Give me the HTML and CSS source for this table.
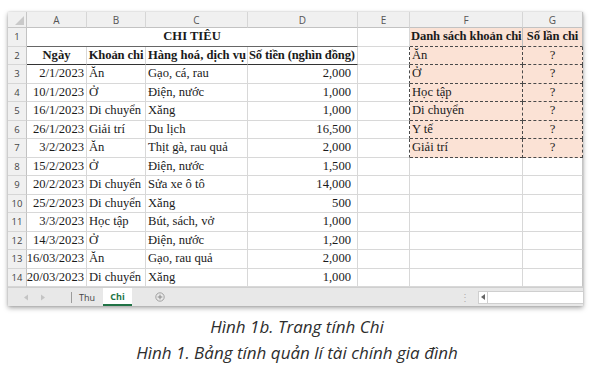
FILE: index.html
```html
<!DOCTYPE html>
<html lang="vi">
<head>
<meta charset="utf-8">
<link rel="stylesheet" href="styles.css">
</head>
<body>
<div class="sheet">
  <div class="grid">
    <div class="corner"><span class="tri"></span></div>
    <div class="ch">A</div><div class="ch">B</div><div class="ch">C</div><div class="ch">D</div><div class="ch">E</div><div class="ch">F</div><div class="ch last">G</div>

    <div class="rh">1</div>
    <div class="c span4 ctr b t1">CHI TIÊU</div>
    <div class="c"></div>
    <div class="c pkh b">Danh sách khoản chi</div>
    <div class="c pkh b ctr last">Số lần chi</div>

    <div class="rh">2</div>
    <div class="c ctr b t2">Ngày</div>
    <div class="c ctr b t2 tight2">Khoản chi</div>
    <div class="c b t2">Hàng hoá, dịch vụ</div>
    <div class="c b t2 tight">Số tiền (nghìn đồng)</div>
    <div class="c el"></div>
    <div class="c pk">Ăn</div>
    <div class="c pk ctr last">?</div>

    <div class="rh">3</div>
    <div class="c r">2/1/2023</div><div class="c">Ăn</div><div class="c">Gạo, cá, rau</div><div class="c num">2,000</div>
    <div class="c el"></div><div class="c pk">Ở</div><div class="c pk ctr last">?</div>

    <div class="rh">4</div>
    <div class="c r">10/1/2023</div><div class="c">Ở</div><div class="c">Điện, nước</div><div class="c num">1,000</div>
    <div class="c el"></div><div class="c pk">Học tập</div><div class="c pk ctr last">?</div>

    <div class="rh">5</div>
    <div class="c r">16/1/2023</div><div class="c">Di chuyển</div><div class="c">Xăng</div><div class="c num">1,000</div>
    <div class="c el"></div><div class="c pk">Di chuyển</div><div class="c pk ctr last">?</div>

    <div class="rh">6</div>
    <div class="c r">26/1/2023</div><div class="c">Giải trí</div><div class="c">Du lịch</div><div class="c num">16,500</div>
    <div class="c el"></div><div class="c pk">Y tế</div><div class="c pk ctr last">?</div>

    <div class="rh">7</div>
    <div class="c r">3/2/2023</div><div class="c">Ăn</div><div class="c">Thịt gà, rau quả</div><div class="c num">2,000</div>
    <div class="c el"></div><div class="c pk">Giải trí</div><div class="c pk ctr last">?</div>

    <div class="rh">8</div>
    <div class="c r">15/2/2023</div><div class="c">Ở</div><div class="c">Điện, nước</div><div class="c num">1,500</div>
    <div class="c"></div><div class="c"></div><div class="c last"></div>

    <div class="rh">9</div>
    <div class="c r">20/2/2023</div><div class="c">Di chuyển</div><div class="c">Sửa xe ô tô</div><div class="c num">14,000</div>
    <div class="c"></div><div class="c"></div><div class="c last"></div>

    <div class="rh">10</div>
    <div class="c r">25/2/2023</div><div class="c">Di chuyển</div><div class="c">Xăng</div><div class="c num">500</div>
    <div class="c"></div><div class="c"></div><div class="c last"></div>

    <div class="rh">11</div>
    <div class="c r">3/3/2023</div><div class="c">Học tập</div><div class="c">Bút, sách, vở</div><div class="c num">1,000</div>
    <div class="c"></div><div class="c"></div><div class="c last"></div>

    <div class="rh">12</div>
    <div class="c r">14/3/2023</div><div class="c">Ở</div><div class="c">Điện, nước</div><div class="c num">1,200</div>
    <div class="c"></div><div class="c"></div><div class="c last"></div>

    <div class="rh">13</div>
    <div class="c r">16/03/2023</div><div class="c">Ăn</div><div class="c">Gạo, rau quả</div><div class="c num">2,000</div>
    <div class="c"></div><div class="c"></div><div class="c last"></div>

    <div class="rh">14</div>
    <div class="c r">20/03/2023</div><div class="c">Di chuyển</div><div class="c">Xăng</div><div class="c num">1,000</div>
    <div class="c"></div><div class="c"></div><div class="c last"></div>
  </div>

  <div class="tabs">
    <div class="nav">
      <svg width="6" height="7" viewBox="0 0 6 7"><path d="M5 0.5 L1 3.5 L5 6.5 Z" fill="#c4c4c4"/></svg>
      <svg width="6" height="7" viewBox="0 0 6 7"><path d="M1 0.5 L5 3.5 L1 6.5 Z" fill="#c4c4c4"/></svg>
    </div>
    <div class="sep"></div>
    <div class="tab">Thu</div>
    <div class="tab active">Chi</div>
    <div class="add">
      <svg width="10" height="10" viewBox="0 0 10 10"><circle cx="5" cy="5" r="4.2" fill="none" stroke="#9a9a9a" stroke-width="0.9"/><path d="M5 2.7 V7.3 M2.7 5 H7.3" stroke="#8a8a8a" stroke-width="1"/></svg>
    </div>
    <div class="spacer"></div>
    <div class="dots">⋮</div>
    <div class="scroll">
      <div class="sbtn"><svg width="4" height="6" viewBox="0 0 4 6"><path d="M4 0 L0 3 L4 6 Z" fill="#666"/></svg></div>
      <div class="track"></div>
    </div>
  </div>
</div>

<div class="captions">
  <p>Hình 1b. Trang tính Chi</p>
  <p>Hình 1. Bảng tính quản lí tài chính gia đình</p>
</div>
</body>
</html>
```

FILE: styles.css
```css
* { box-sizing: border-box; }

body {
  margin: 0;
  background: #ffffff;
  width: 604px;
  height: 372px;
  overflow: hidden;
}

.sheet {
  margin: 12px 0 0 8px;
  width: 575px;
  background: #ffffff;
  box-shadow: 0 2px 5px rgba(0, 0, 0, 0.35), 0 0 2px rgba(0, 0, 0, 0.15);
}

.grid {
  display: grid;
  grid-template-columns: 19px 60px 59px 102px 110px 52px 113px 60px;
  grid-template-rows: 16px;
  grid-auto-rows: 18.5px;
}

.corner {
  background: #f0f0f0;
  border-right: 1px solid #c6c6c6;
  border-bottom: 1px solid #c6c6c6;
  position: relative;
}

.tri {
  position: absolute;
  right: 2px;
  bottom: 2px;
  width: 0;
  height: 0;
  border-left: 9px solid transparent;
  border-bottom: 9px solid #c9c9c9;
}

.ch {
  background: #f0f0f0;
  border-right: 1px solid #d6d6d6;
  border-bottom: 1px solid #c2c2c2;
  font-family: "Open Sans", "Liberation Sans", sans-serif;
  font-size: 10px;
  color: #555555;
  display: flex;
  align-items: center;
  justify-content: center;
}

.rh {
  background: #f0f0f0;
  border-right: 1px solid #c2c2c2;
  border-bottom: 1px solid #d6d6d6;
  font-family: "Open Sans", "Liberation Sans", sans-serif;
  font-size: 9.5px;
  color: #444444;
  display: flex;
  align-items: center;
  justify-content: center;
}

.c {
  border-right: 1px solid #d8d8d8;
  border-bottom: 1px solid #d8d8d8;
  font-family: "Liberation Serif", "Times New Roman", serif;
  font-size: 12.6px;
  color: #1a1a1a;
  padding: 0 2px;
  display: flex;
  align-items: center;
  white-space: nowrap;
  overflow: visible;
}

.last { border-right-color: #c4c4c4; }

.span4 { grid-column: span 4; }
.ctr { justify-content: center; }
.r { justify-content: flex-end; }
.num { justify-content: flex-end; padding-right: 6px; }
.b { font-weight: bold; }
.tight { padding: 0 0 0 1px; letter-spacing: -0.15px; }
.tight2 { padding: 0; letter-spacing: -0.1px; }

.t1 { border-bottom: 1px solid #666666; }
.t2 { border-bottom: 1px solid #333333; }

.pkh {
  background: #fbe2d5;
  border-bottom: 1px dashed #4a4a4a;
  border-right-color: #bdbdbd;
  padding: 0 1px;
  letter-spacing: -0.1px;
}

.pk {
  background: #fbe2d5;
  border-right: 1px dashed #4a4a4a;
  border-bottom: 1px dashed #4a4a4a;
}

.el { border-right: 1px dashed #4a4a4a; }

.tabs {
  height: 19px;
  background: #e8e8e8;
  border-top: 1px solid #cfcfcf;
  display: flex;
  align-items: stretch;
  font-family: "Open Sans", "Liberation Sans", sans-serif;
  font-size: 9px;
}

.nav {
  width: 63px;
  display: flex;
  align-items: center;
  gap: 11px;
  padding-left: 15px;
}

.sep {
  width: 1px;
  height: 11px;
  align-self: center;
  background: #9c9c9c;
}

.tab {
  display: flex;
  align-items: center;
  justify-content: center;
  color: #444444;
  width: 30px;
}

.tab.active {
  background: #ffffff;
  color: #217346;
  font-weight: bold;
  width: 29px;
  margin-left: 1px;
  border-bottom: 2px solid #217346;
}

.add {
  display: flex;
  align-items: center;
  padding-left: 23px;
}

.spacer { flex: 1; }

.dots {
  display: flex;
  align-items: center;
  color: #b0b0b0;
  font-size: 10px;
  padding-right: 8px;
}

.scroll {
  width: 105px;
  display: flex;
  align-items: center;
}

.sbtn {
  width: 10px;
  height: 13px;
  background: #ffffff;
  border: 1px solid #cfcfcf;
  display: flex;
  align-items: center;
  justify-content: center;
}

.track {
  flex: 1;
  height: 13px;
  background: #ffffff;
  border-top: 1px solid #cfcfcf;
  border-bottom: 1px solid #cfcfcf;
}

.captions {
  width: 594px;
  margin-top: 8px;
  text-align: center;
  font-family: "Open Sans", "Noto Sans", sans-serif;
  font-style: italic;
  font-size: 17px;
  color: #2e2e2e;
}

.captions p {
  margin: 0;
  line-height: 26px;
}
```
